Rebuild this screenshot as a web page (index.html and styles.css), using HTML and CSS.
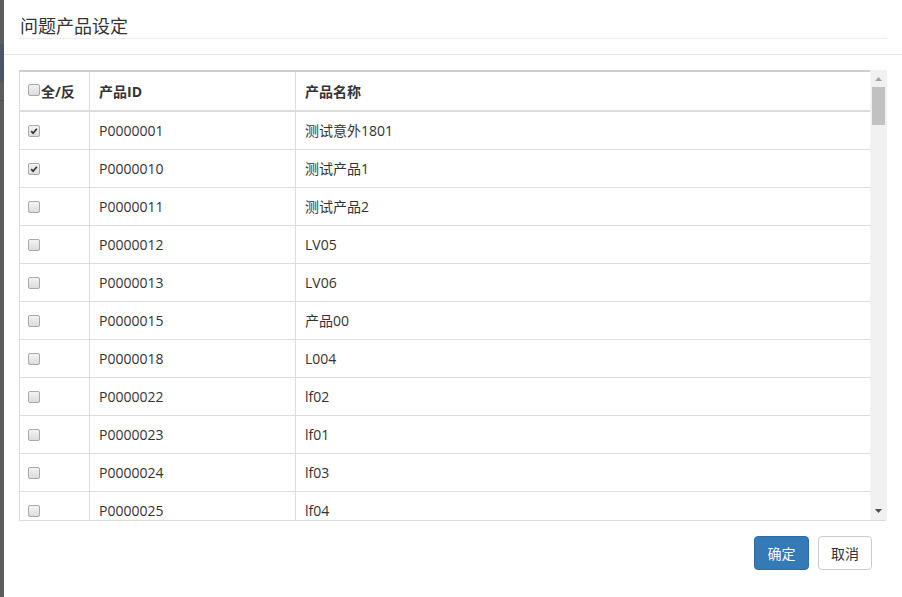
FILE: index.html
```html
<!DOCTYPE html>
<html>
<head>
<meta charset="utf-8">
<link rel="stylesheet" href="styles.css">
</head>
<body>
<div class="strip"></div>
<div class="modal">
  <div class="modal-header">
    <h4 class="modal-title">问题产品设定</h4>
  </div>
  <div class="modal-body">
    <div class="grid-wrap">
      <div class="grid-view">
        <table class="grid">
          <colgroup>
            <col class="c1"><col class="c2"><col class="c3">
          </colgroup>
          <thead>
            <tr>
              <th><span class="cb head-cb"></span>全/反</th>
              <th>产品ID</th>
              <th>产品名称</th>
            </tr>
          </thead>
          <tbody>
            <tr><td><span class="cb checked"><svg viewBox="0 0 12 12"><path d="M2.6 6.2 L4.9 8.6 L9.4 3.2"/></svg></span></td><td>P0000001</td><td>测试意外1801</td></tr>
            <tr><td><span class="cb checked"><svg viewBox="0 0 12 12"><path d="M2.6 6.2 L4.9 8.6 L9.4 3.2"/></svg></span></td><td>P0000010</td><td>测试产品1</td></tr>
            <tr><td><span class="cb"></span></td><td>P0000011</td><td>测试产品2</td></tr>
            <tr><td><span class="cb"></span></td><td>P0000012</td><td>LV05</td></tr>
            <tr><td><span class="cb"></span></td><td>P0000013</td><td>LV06</td></tr>
            <tr><td><span class="cb"></span></td><td>P0000015</td><td>产品00</td></tr>
            <tr><td><span class="cb"></span></td><td>P0000018</td><td>L004</td></tr>
            <tr><td><span class="cb"></span></td><td>P0000022</td><td>lf02</td></tr>
            <tr><td><span class="cb"></span></td><td>P0000023</td><td>lf01</td></tr>
            <tr><td><span class="cb"></span></td><td>P0000024</td><td>lf03</td></tr>
            <tr><td><span class="cb"></span></td><td>P0000025</td><td>lf04</td></tr>
          </tbody>
        </table>
      </div>
      <div class="scrollbar">
        <div class="sb-btn"><svg viewBox="0 0 17 17"><polygon class="up" points="5,11 12,11 8.5,7"/></svg></div>
        <div class="sb-track"><div class="sb-thumb"></div></div>
        <div class="sb-btn"><svg viewBox="0 0 17 17"><polygon class="down" points="5,6 12,6 8.5,10"/></svg></div>
      </div>
    </div>
  </div>
  <div class="modal-footer">
    <button class="btn btn-primary">确定</button>
    <button class="btn btn-default">取消</button>
  </div>
</div>
</body>
</html>
```
FILE: styles.css
```css
html, body {
  margin: 0;
  padding: 0;
  height: 597px;
  overflow: hidden;
}
body {
  display: flex;
  background: #5a5a5a;
  font-family: "Open Sans", "Noto Sans CJK SC", sans-serif;
  font-size: 14px;
  color: #333;
}
.strip {
  width: 4px;
  flex: none;
  background: linear-gradient(to bottom, #5c5c5c 0 44px, #4b5666 44px 82px, #5c5c5c 82px 100px, #4e4e4e 100px 101px, #5c5c5c 101px);
}
.modal {
  flex: 1;
  background: #fff;
  display: flex;
  flex-direction: column;
}
.modal-header {
  padding: 13px 15px 15px 15px;
  border-bottom: 1px solid #e5e5e5;
}
.modal-title {
  margin: 0;
  font-size: 18px;
  line-height: 25px;
  font-weight: normal;
  color: #333;
  padding-left: 1px;
  border-bottom: 1px solid #eee;
  font-family: "Noto Sans CJK SC", sans-serif;
}
.modal-body {
  padding: 15px 15px 0 15px;
}
.grid-wrap {
  display: flex;
  height: 450px;
  border-bottom: 1px solid #ddd;
  width: 867px;
}
.grid-view {
  width: 851px;
  flex: none;
  overflow: hidden;
}
.grid {
  border-collapse: collapse;
  table-layout: fixed;
  width: 851px;
  border-top: 2px solid #cfcfcf;
}
.c1 { width: 70px; }
.c2 { width: 206px; }
.c3 { width: 575px; }
.grid th, .grid td {
  border: 1px solid #ddd;
  padding: 0 8px;
  height: 37px;
  line-height: 20px;
  text-align: left;
  vertical-align: middle;
  white-space: nowrap;
}
.grid th {
  font-weight: bold;
  border-bottom: 2px solid #ddd;
  border-top: none;
  height: 37px;
  padding-top: 1px;
}
.grid td:nth-child(n+2), .grid th:nth-child(n+2) {
  padding-left: 9px;
}
.cb {
  display: inline-block;
  box-sizing: border-box;
  width: 12px;
  height: 12px;
  border: 1px solid #a9a9a9;
  border-radius: 2px;
  background: linear-gradient(#f3f3f3, #dcdcdc);
  vertical-align: middle;
  position: relative;
  top: -1px;
}
.head-cb {
  top: -3px;
  margin-right: 1px;
}
.cb svg {
  display: block;
  width: 10px;
  height: 10px;
}
.cb svg path {
  fill: none;
  stroke: #333;
  stroke-width: 2;
}
.scrollbar {
  width: 17px;
  flex: none;
  background: #f1f1f1;
  display: flex;
  flex-direction: column;
}
.sb-btn {
  height: 17px;
  flex: none;
}
.sb-btn svg {
  display: block;
  width: 17px;
  height: 17px;
}
.up { fill: #a3a3a3; }
.down { fill: #505050; }
.sb-track {
  flex: 1;
  padding: 0 2px;
}
.sb-thumb {
  height: 38px;
  background: #c1c1c1;
}
.modal-footer {
  display: flex;
  justify-content: flex-end;
  gap: 9px;
  padding: 15px 30px 0 0;
}
.btn {
  font-family: "Noto Sans CJK SC", sans-serif;
  font-size: 14px;
  line-height: 20px;
  padding: 6px 12px;
  border: 1px solid #ccc;
  border-radius: 4px;
  background: #fff;
  color: #333;
  margin: 0;
}
.btn-primary {
  background: #337ab7;
  border-color: #2e6da4;
  color: #fff;
  width: 55px;
}
```
